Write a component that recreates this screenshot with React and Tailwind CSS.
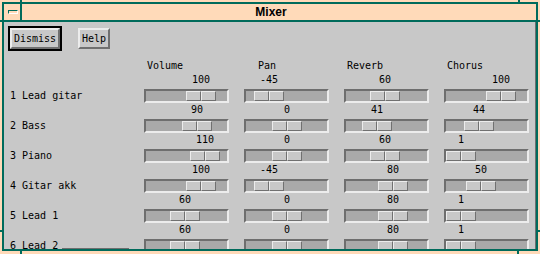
import React from 'react';

const tracks = [
  { name: '1 Lead gitar', vals: [100, -45, 60, 100] },
  { name: '2 Bass', vals: [90, 0, 41, 44] },
  { name: '3 Piano', vals: [110, 0, 60, 1] },
  { name: '4 Gitar akk', vals: [100, -45, 80, 50] },
  { name: '5 Lead 1', vals: [60, 0, 80, 1] },
  { name: '6 Lead 2', vals: [60, 0, 80, 1] },
];

const columns = [
  { title: 'Volume', min: 0, max: 127, pad: 'pl-[3px]' },
  { title: 'Pan', min: -64, max: 63, pad: 'pl-[14px]' },
  { title: 'Reverb', min: 0, max: 127, pad: 'pl-[3px]' },
  { title: 'Chorus', min: 0, max: 127, pad: 'pl-[3px]' },
];

function Scale({ value, min, max }) {
  // thumb is 30px, trough inside is 81px -> 51px of travel
  const off = Math.round(((value - min) / (max - min)) * 51);
  return (
    <div className="flex flex-col w-[85px]">
      <div className="h-[14px] leading-[14px]" style={{ paddingLeft: off + 2 }}>
        <span className="inline-block w-[30px] text-center">{value}</span>
      </div>
      <div className="mt-[2px] h-[14px] w-[85px] border-2 border-t-[#6e6e6e] border-l-[#6e6e6e] border-b-[#ececec] border-r-[#ececec] bg-[#a9a9a9] flex items-start">
        <div className="flex h-[10px] w-[30px]" style={{ marginLeft: off }}>
          <div className="w-[15px] h-full border border-t-[#ececec] border-l-[#ececec] border-b-[#707070] border-r-[#707070] bg-[#c8c8c8]" />
          <div className="w-[15px] h-full border border-t-[#ececec] border-l-[#ececec] border-b-[#707070] border-r-[#707070] bg-[#c8c8c8]" />
        </div>
      </div>
    </div>
  );
}

function Notch({ className }) {
  return <div className={`absolute bg-[#006b5b] ${className}`} />;
}

export default function App() {
  return (
    <div
      className="relative w-[540px] h-[254px] bg-[#ffdab9] pt-[2px] pl-[2px] pr-[2px] pb-[3px] overflow-hidden"
      style={{ fontFamily: '"DejaVu Sans Mono", monospace' }}
    >
      <Notch className="top-0 left-[20px] w-[2px] h-[4px]" />
      <Notch className="top-0 left-[518px] w-[2px] h-[4px]" />
      <Notch className="top-[20px] left-0 w-[4px] h-[2px]" />
      <Notch className="top-[20px] right-0 w-[4px] h-[2px]" />
      <Notch className="top-[230px] left-0 w-[4px] h-[2px]" />
      <Notch className="top-[230px] right-0 w-[4px] h-[2px]" />
      <Notch className="bottom-0 left-[20px] w-[2px] h-[5px]" />
      <Notch className="bottom-0 left-[517px] w-[2px] h-[5px]" />

      <div className="h-full flex flex-col border-2 border-[#006b5b]">
        <div className="flex h-[18px] shrink-0 border-b-2 border-[#006b5b]">
          <div className="w-[18px] flex items-center border-r-2 border-[#006b5b]">
            <div className="ml-[4px] w-[10px] h-[4px] border border-t-[#006b5b] border-l-[#006b5b] border-b-white border-r-white" />
          </div>
          <div
            className="flex-1 flex items-center justify-center pr-[16px] text-[12px] font-bold text-black"
            style={{ fontFamily: '"Liberation Sans", Arial, sans-serif' }}
          >
            Mixer
          </div>
        </div>

        <div className="relative flex-1 bg-[#c8c8c8] border-r border-[#6e6e6e] overflow-hidden text-[10px] text-black">
          <div className="flex items-center h-[25px] mt-[4px] pl-[4px]">
            <div className="border-2 border-black">
              <button className="h-[21px] w-[50px] border-2 border-t-[#ececec] border-l-[#ececec] border-b-[#707070] border-r-[#707070] bg-[#c8c8c8] leading-[17px] text-center">
                Dismiss
              </button>
            </div>
            <button className="ml-[16px] h-[21px] w-[32px] border-2 border-t-[#ececec] border-l-[#ececec] border-b-[#707070] border-r-[#707070] bg-[#c8c8c8] leading-[17px] text-center">
              Help
            </button>
          </div>

          <div className="grid grid-cols-[140px_100px_100px_100px_1fr] mt-[8px]">
            <div className="h-[14px]" />
            {columns.map(c => (
              <div key={c.title} className={`h-[14px] leading-[14px] ${c.pad}`}>{c.title}</div>
            ))}
            {tracks.map(t => (
              <React.Fragment key={t.name}>
                <div className="flex flex-col pl-[6px]">
                  <div className="h-[16px]" />
                  <div className="h-[14px] leading-[14px] whitespace-pre">{t.name}</div>
                </div>
                {t.vals.map((v, i) => (
                  <Scale key={i} value={v} min={columns[i].min} max={columns[i].max} />
                ))}
              </React.Fragment>
            ))}
          </div>

          <div className="absolute bottom-0 left-[58px] w-[67px] h-[1px] bg-[#6e6e6e]" />
        </div>
      </div>
    </div>
  );
}
